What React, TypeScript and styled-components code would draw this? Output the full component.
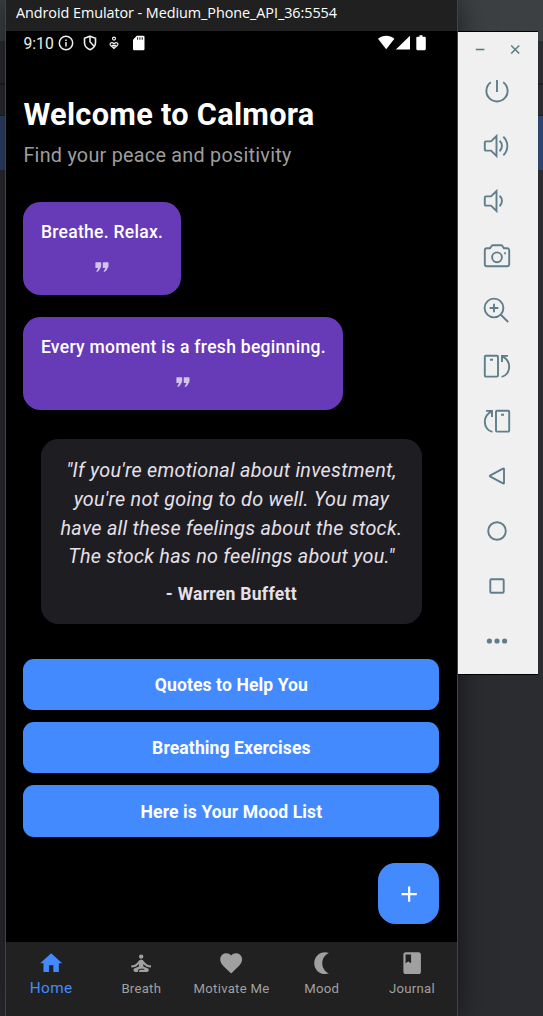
import React from "react";
import styled, { createGlobalStyle } from "styled-components";
import {
  MdHome,
  MdSelfImprovement,
  MdFavorite,
  MdBook,
  MdAdd,
} from "react-icons/md";

const GlobalStyle = createGlobalStyle`
  * { box-sizing: border-box; }
  body { margin: 0; overflow: hidden; font-family: Roboto, sans-serif; }
`;

const Desktop = styled.div`
  display: flex;
  align-items: flex-start;
  width: 543px;
  height: 1016px;
  padding-left: 5px;
  overflow: hidden;
  background: linear-gradient(
    #3c4043 0 41px,
    #2b2c30 41px 83px,
    #1e1f22 83px 85px,
    #2b2c30 85px 115px,
    #1e1f22 115px 116px,
    #2e436e 116px 170px,
    #2b2c30 170px
  );
`;

const Emulator = styled.div`
  display: flex;
  flex-direction: column;
  width: 453px;
  height: 1016px;
  border: solid #434343;
  border-width: 0 1px;
  background: #000;
  box-shadow: 0 0 28px rgba(0, 0, 0, 0.55);
`;

const TitleBar = styled.div`
  height: 31px;
  padding-left: 10px;
  background: #202020;
  color: #fff;
  font: 14.4px/26px "Open Sans", "Noto Sans", sans-serif;
  letter-spacing: -0.06px;
  white-space: nowrap;
`;

const StatusBar = styled.div`
  display: flex;
  align-items: center;
  height: 25px;
  padding: 0 31px 0 17.5px;
  color: #eee;
`;

const Clock = styled.span`
  width: 34.5px;
  font-size: 15.7px;
  line-height: 24px;
`;

const StatusIcons = styled.div<{ $end?: boolean }>`
  display: flex;
  align-items: center;
  gap: 8px;
  margin-left: ${(p) => (p.$end ? "auto" : "0")};
  padding-bottom: 1px;
  svg { display: block; }
`;

const Content = styled.main`
  display: flex;
  flex-direction: column;
  align-items: flex-start;
  height: 886px;
  padding: 38.5px 17.6px 0 17.4px;
`;

const Heading = styled.h1`
  margin: 0;
  color: #fff;
  font-size: 30.7px;
  font-weight: 700;
  line-height: 40px;
  letter-spacing: 0.3px;
  white-space: nowrap;
`;

const Subtitle = styled.p`
  margin: 7px 0 0;
  color: #9e9e9e;
  font-size: 19.75px;
  line-height: 28px;
  letter-spacing: 0.27px;
  white-space: nowrap;
`;

const MantraList = styled.div`
  display: flex;
  flex-direction: column;
  align-items: flex-start;
  gap: 22.4px;
  margin-top: 32.5px;
`;

const MantraCard = styled.div`
  display: flex;
  flex-direction: column;
  align-items: center;
  gap: 10.5px;
  padding: 18px 17.5px 17.5px;
  border-radius: 17.5px;
  background: #673ab7;
  color: #fff;
  font-size: 17.55px;
  font-weight: 500;
  line-height: 25px;
  letter-spacing: 0.28px;
  white-space: nowrap;
  svg { display: block; color: rgba(255, 255, 255, 0.7); }
`;

const QuoteCard = styled.figure`
  width: 381px;
  margin: 29px 0 0 17.5px;
  padding: 18px 0 17px;
  border-radius: 17.5px;
  background: #1e1d22;
  color: #e6e0e9;
  text-align: center;
  white-space: nowrap;
`;

const QuoteText = styled.blockquote`
  margin: 0;
  font-size: 19.75px;
  font-style: italic;
  line-height: 28.6px;
  letter-spacing: 0.27px;
`;

const Author = styled.figcaption`
  margin-top: 10.4px;
  font-size: 17.55px;
  font-weight: 700;
  line-height: 25px;
  letter-spacing: 0.27px;
`;

const Actions = styled.div`
  display: flex;
  flex-direction: column;
  gap: 12px;
  width: 100%;
  margin-top: 34.5px;
`;

const ActionButton = styled.button`
  height: 51.4px;
  padding: 1.9px 0 0;
  border: 0;
  border-radius: 11px;
  background: #448aff;
  color: #fff;
  font: 700 17.55px/25px Roboto, sans-serif;
  letter-spacing: 0.11px;
`;

const AddButton = styled.button`
  display: flex;
  align-items: center;
  justify-content: center;
  align-self: flex-end;
  width: 61.4px;
  height: 61.4px;
  margin-top: 26.2px;
  padding: 1px 0 0;
  border: 0;
  border-radius: 17.5px;
  background: #448aff;
  color: #fff;
`;

const BottomNav = styled.nav`
  display: grid;
  grid-template-columns: repeat(5, 1fr);
  height: 74px;
  background: #212121;
`;

const NavItem = styled.a<{ $active?: boolean }>`
  display: flex;
  flex-direction: column;
  align-items: center;
  padding-top: 8px;
  color: ${(p) => (p.$active ? "#448aff" : "#a0a0a0")};
  font-size: ${(p) => (p.$active ? 15.36 : 13.17)}px;
  line-height: 24px;
  letter-spacing: ${(p) => (p.$active ? 0.4 : 0.26)}px;
  white-space: nowrap;
  svg { display: block; flex: none; }
  span { margin-top: ${(p) => (p.$active ? -0.5 : 0.5)}px; }
`;

const Toolbar = styled.aside`
  position: relative;
  display: flex;
  flex-direction: column;
  align-items: center;
  width: 80px;
  height: 644px;
  margin-top: 31px;
  border: solid #000;
  border-width: 1px 0;
  background: #f0f0f0;
  color: #607d8b;
  svg {
    display: block;
    fill: none;
    stroke: currentColor;
    stroke-width: 1.9;
  }
`;

const WindowControls = styled.div`
  display: flex;
  align-self: stretch;
  justify-content: space-between;
  height: 31px;
  padding: 12px 18.5px 0 17px;
  svg { stroke-width: 1.6; }
`;

const ToolList = styled.div`
  display: flex;
  flex-direction: column;
  gap: 27px;
  padding-top: 14px;
  margin-left: -2px;
`;

const speaker = (
  <path d="M1.8 10.4q0-1 1-1H8L13.5 4v20L8 18.6H2.8q-1 0-1-1z" />
);

const rotate = (
  <>
    <rect x="1.8" y="3.8" width="13.2" height="20.8" rx="1" />
    <path d="M7 7.700h3M25 3.900h-6v6M19.300 4.200C23.500 6.500 26.200 10 26.200 14.800c0 5.200-3.200 9.200-7.600 10.100" />
  </>
);

const tools: { name: string; art: React.ReactNode }[] = [
  { name: "Power", art: <path d="M14 3v12M7.800 5.300A10.600 10.600 0 1 0 20.200 5.300" /> },
  {
    name: "Volume up",
    art: (
      <>
        {speaker}
        <path d="M16.600 8.800a7 7 0 0 1 0 10.400M20.300 4.800a12.500 12.500 0 0 1 0 18.400" />
      </>
    ),
  },
  {
    name: "Volume down",
    art: (
      <>
        {speaker}
        <path d="M16.600 8.800a7 7 0 0 1 0 10.400" />
      </>
    ),
  },
  {
    name: "Screenshot",
    art: (
      <>
        <path d="M3.800 6.300H7l1.800-2.600q.3-.4.800-.4h8.800q.500 0 .8.400L21 6.300h3.200q2 0 2 2v14q0 2-2 2H3.800q-2 0-2-2v-14q0-2 2-2z" />
        <circle cx="14" cy="15.300" r="4.900" />
        <path d="M21.200 11.300h1.700" />
      </>
    ),
  },
  {
    name: "Zoom",
    art: (
      <>
        <circle cx="11" cy="11" r="9.400" />
        <path d="M17.800 17.800l7.400 7.200M6.700 11h8.600M11 6.700v8.600" />
      </>
    ),
  },
  { name: "Rotate left", art: rotate },
  { name: "Rotate right", art: <g transform="matrix(-1 0 0 1 28 0)">{rotate}</g> },
  {
    name: "Back",
    art: (
      <path
        strokeLinejoin="round"
        d="M7.400 13.300L20 6.700q1-.5 1 .600v13.400q0 1.100-1 .600L7.400 14.700q-1.200-.7 0-1.400z"
      />
    ),
  },
  { name: "Home", art: <circle cx="14" cy="14" r="8.800" /> },
  { name: "Overview", art: <rect x="7.300" y="7.300" width="13.400" height="13.400" rx="1" /> },
  {
    name: "More",
    art: (
      <g fill="currentColor" stroke="none">
        <circle cx="6.400" cy="14" r="2.600" />
        <circle cx="14" cy="14" r="2.600" />
        <circle cx="21.600" cy="14" r="2.600" />
      </g>
    ),
  },
];

const Crescent = ({ size }: { size: number }) => (
  <svg width={size} height={size} viewBox="0 0 24 24" fill="currentColor">
    <path d="M14.600 22c1.250 0 2.500-.25 3.600-.7-3.700-1.600-6.100-5.200-6.100-9.300s2.400-7.700 6.100-9.300c-1.100-.45-2.350-.7-3.600-.7-5.520 0-9.800 4.480-9.800 10s4.280 10 9.800 10z" />
  </svg>
);

const QuoteMark = () => (
  <svg width="22" height="22" viewBox="0 0 24 24" fill="currentColor">
    <path d="M5.600 17.200c2-.2 2.700-.8 3.400-2l1.700-2.900q.400-.7.400-1.500V7.500q0-.7-.7-.7H5.500q-.7 0-.7.700v5q0 .7.700.7h2.300z" />
    <path d="M13.600 17.200c2-.2 2.700-.8 3.400-2l1.700-2.900q.400-.7.400-1.500V7.500q0-.7-.7-.7h-4.900q-.7 0-.7.700v5q0 .7.700.7h2.300z" />
  </svg>
);

const navItems = [
  { label: "Home", Icon: MdHome },
  { label: "Breath", Icon: MdSelfImprovement },
  { label: "Motivate Me", Icon: MdFavorite },
  { label: "Mood", Icon: Crescent },
  { label: "Journal", Icon: MdBook },
];

const mantras = ["Breathe. Relax.", "Every moment is a fresh beginning."];
const actions = ["Quotes to Help You", "Breathing Exercises", "Here is Your Mood List"];

export default function App() {
  return (
    <>
      <GlobalStyle />
      <Desktop>
        <Emulator>
          <TitleBar>Android Emulator - Medium_Phone_API_36:5554</TitleBar>
          <StatusBar>
            <Clock>9:10</Clock>
            <StatusIcons>
              <svg width="16" height="16" viewBox="0 0 16 16" fill="none" stroke="currentColor" strokeWidth="1.500">
                <circle cx="8" cy="8" r="6.700" />
                <path d="M8 7v4.500M8 4.400v1.500" />
              </svg>
              <svg width="16" height="16" viewBox="0 0 16 16" fill="none" stroke="currentColor" strokeWidth="1.600">
                <path d="M8 1.200l5.500 2v4.300c0 3.300-2.300 6-5.500 7.200C4.800 13.500 2.500 10.800 2.500 7.500V3.200z" />
                <path d="M8 1.500v5.300l4.300 4.600" strokeWidth="1.500" />
              </svg>
              <svg width="16" height="16" viewBox="0 0 16 16" fill="none" stroke="currentColor" strokeWidth="1.200">
                <circle cx="8" cy="3.600" r="1.500" />
                <path d="M8 13.500L4.600 10.300C3 8.500 5.500 6.200 8 8.800c2.500-2.600 5-.3 3.400 1.500zM6 10.300h1.300l.7.900.7-.9H10" />
              </svg>
              <svg width="16" height="16" viewBox="0 0 16 16">
                <path fill="#fff" d="M6.800.8h6.400q1.300 0 1.300 1.300v11.800q0 1.300-1.300 1.300H4.300Q3 15.200 3 13.900V4.700z" />
                <path stroke="#333" strokeWidth="1.100" d="M7.600 2.200v2.600M9.900 2.200v2.600M12.200 2.200v2.600" />
              </svg>
            </StatusIcons>
            <StatusIcons $end>
              <svg width="48" height="16" viewBox="0 0 48 16" fill="#fff">
                <path d="M0 3.700C4.700-.3 11.700-.3 16.400 3.700L8.200 14.200z" />
                <path d="M32 .8v13.700H17.800z" />
                <path d="M41.500.3h3v1.500h2.200q1.100 0 1.100 1.100v11.200q0 1.100-1.100 1.100h-7.300q-1.100 0-1.100-1.100V2.900q0-1.100 1.100-1.100h2.100z" />
              </svg>
            </StatusIcons>
          </StatusBar>
          <Content>
            <Heading>Welcome to Calmora</Heading>
            <Subtitle>Find your peace and positivity</Subtitle>
            <MantraList>
              {mantras.map((m) => (
                <MantraCard key={m}>
                  <span>{m}</span>
                  <QuoteMark />
                </MantraCard>
              ))}
            </MantraList>
            <QuoteCard>
              <QuoteText>
                "If you're emotional about investment,
                <br />
                you're not going to do well. You may
                <br />
                have all these feelings about the stock.
                <br />
                The stock has no feelings about you."
              </QuoteText>
              <Author>- Warren Buffett</Author>
            </QuoteCard>
            <Actions>
              {actions.map((a) => (
                <ActionButton key={a}>{a}</ActionButton>
              ))}
            </Actions>
            <AddButton aria-label="Add">
              <MdAdd size={26.3} />
            </AddButton>
          </Content>
          <BottomNav>
            {navItems.map(({ label, Icon }, i) => (
              <NavItem key={label} $active={i === 0}>
                <Icon size={26.3} />
                <span>{label}</span>
              </NavItem>
            ))}
          </BottomNav>
        </Emulator>
        <Toolbar>
          <WindowControls>
            <svg width="10" height="10" viewBox="0 0 10 10">
              <path d="M.8 5.500h8.600" />
            </svg>
            <svg width="10" height="10" viewBox="0 0 10 10">
              <path d="M1.200 1.500l8 8M9.200 1.500l-8 8" />
            </svg>
          </WindowControls>
          <ToolList>
            {tools.map(({ name, art }) => (
              <svg key={name} width="28" height="28" viewBox="0 0 28 28" aria-label={name}>
                {art}
              </svg>
            ))}
          </ToolList>
        </Toolbar>
      </Desktop>
    </>
  );
}
